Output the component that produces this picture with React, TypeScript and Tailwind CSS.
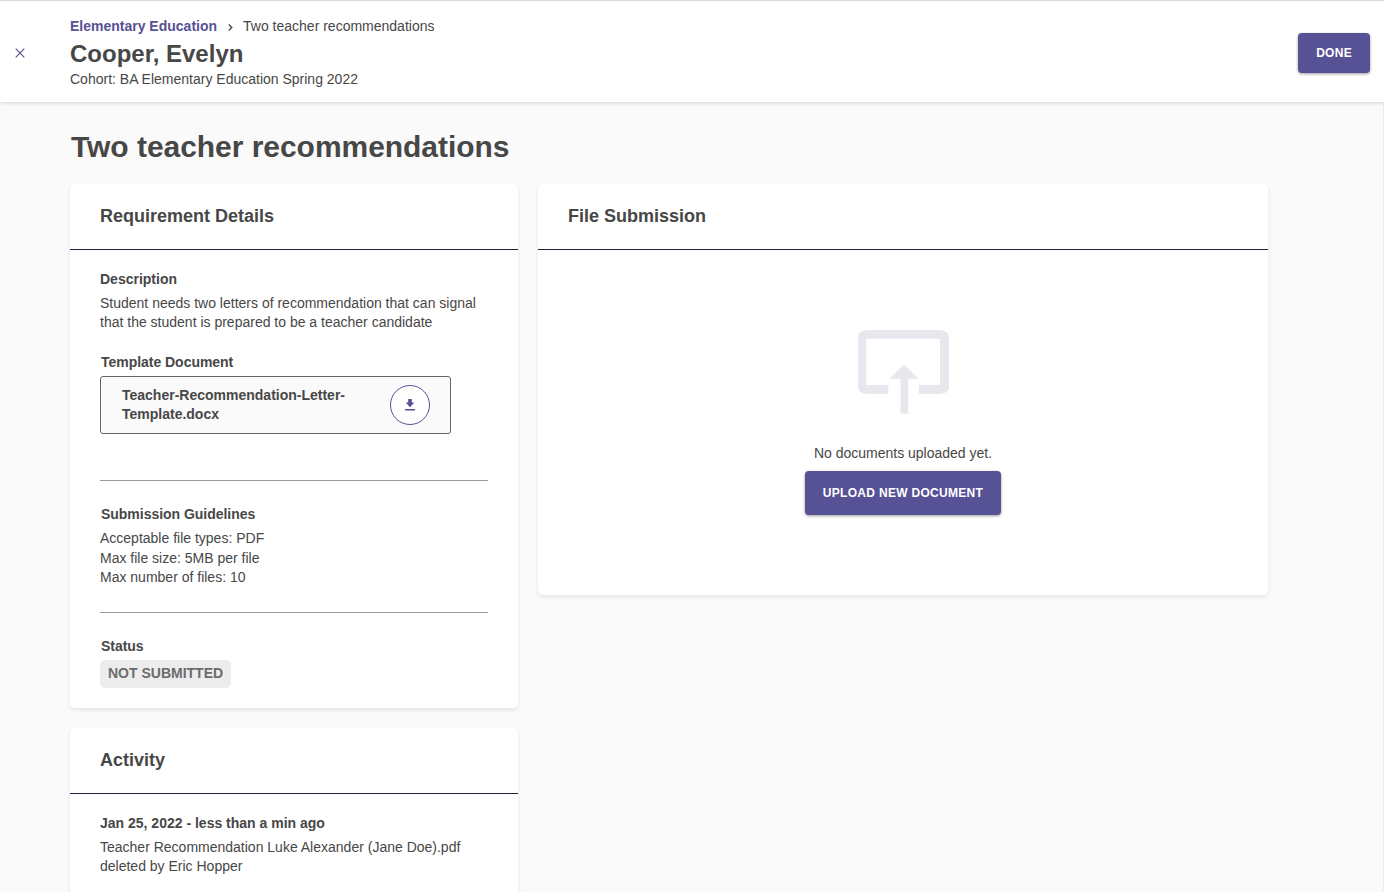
import type { ReactNode } from "react";

function Card({ title, className = "", children }: { title: string; className?: string; children: ReactNode }) {
  return (
    <section className={`rounded-[5px] bg-white shadow-[0_2px_4px_rgba(0,0,0,0.09)] ${className}`}>
      <h2 className="h-[66px] border-b border-[#2b1d45] px-[30px] pt-[19px] text-lg leading-[26px] font-bold">{title}</h2>
      {children}
    </section>
  );
}

function Label({ children }: { children: ReactNode }) {
  return <h3 className="pl-px leading-5 font-bold tracking-[-0.03px]">{children}</h3>;
}

// Outlined screen with an arrow coming in from below
function UploadIcon() {
  return (
    <svg width="91" height="84" viewBox="0 0 91 84" fill="#e9e7ed" aria-hidden="true">
      <path d="M9 0H82Q91 1 91 7V57Q91 63 82 64H61V55H82V8.700H8.300V55H30.300V64H9Q0 63 0 57V7Q0 1 9 0Z" />
      <path d="M46 34.500L60.500 48.700H50.200V83.700H42.500V48.700H31.500Z" />
    </svg>
  );
}

export default function App() {
  return (
    <div className="flex h-screen flex-col overflow-hidden bg-[#fafafa] font-['Liberation_Sans',Arial,sans-serif] text-sm leading-[19.5px] text-[#474747]">
      <header className="z-10 flex h-[102px] shrink-0 border-t border-[#dadada] bg-white shadow-[0_1px_4px_rgba(0,0,0,0.16)]">
        <button aria-label="Close" className="flex w-[70px] items-start pt-[47px] pl-[15px]">
          <svg width="10" height="10" viewBox="0 0 10 10" stroke="#575195" strokeWidth="1.2" fill="none">
            <path d="M0.700 0.700L9.300 9.300M9.300 0.700L0.700 9.300" />
          </svg>
        </button>
        <div className="pt-[15px]">
          <nav className="flex items-center leading-5">
            <a href="#" className="font-bold text-[#575195]">Elementary Education</a>
            <svg className="mt-0.5 mr-2.5 ml-[11px]" width="5" height="7" viewBox="0 0 5 7" stroke="#474747" strokeWidth="1.300" fill="none">
              <path d="M0.800 0.500L3.800 3.500L0.800 6.500" />
            </svg>
            <span>Two teacher recommendations</span>
          </nav>
          <h1 className="mt-[3px] text-2xl leading-[30px] font-bold">Cooper, Evelyn</h1>
          <p className="leading-5">Cohort: BA Elementary Education Spring 2022</p>
        </div>
        <button className="mt-8 mr-3.5 ml-auto h-10 rounded bg-[#575195] px-[18px] text-xs font-bold tracking-[0.3px] text-white shadow-[0_1px_3px_rgba(0,0,0,0.4)]">
          DONE
        </button>
      </header>

      <main className="min-h-0 flex-1 border-r border-[#eeeeee] pl-[70px]">
        <h1 className="pt-[25px] pl-px text-[30px] leading-10 font-bold tracking-[-0.04px]">Two teacher recommendations</h1>

        <div className="mt-[17px] flex items-start gap-5">
          <div className="w-[448px] space-y-5">
            <Card title="Requirement Details" className="h-[524px]">
              <div className="px-[30px] pt-[19px]">
                <h3 className="leading-5 font-bold">Description</h3>
                <p className="mt-[5px] leading-[19px]">
                  Student needs two letters of recommendation that can signal that the student is prepared to be a teacher candidate
                </p>

                <div className="mt-5">
                  <Label>Template Document</Label>
                </div>
                <div className="mt-1 flex h-[58px] w-[351px] items-center justify-between rounded-[3px] border border-[#666666] bg-[#fafafa] pr-5 pl-[21px]">
                  <span className="w-[230px] font-bold">Teacher-Recommendation-Letter-Template.docx</span>
                  <button aria-label="Download" className="flex size-10 items-center justify-center rounded-full border border-[#575195] bg-white">
                    <svg width="10" height="12" viewBox="0 0 10 12" fill="#575195">
                      <path d="M3.200 0H6.800V3.600H9.300L5 8.200L0.700 3.600H3.200ZM0 10H10V11.500H0Z" />
                    </svg>
                  </button>
                </div>

                <div className="mt-[46px] border-t border-[#999999] pt-[23px]">
                  <Label>Submission Guidelines</Label>
                  <ul className="mt-[5px]">
                    <li>Acceptable file types: PDF</li>
                    <li>Max file size: 5MB per file</li>
                    <li>Max number of files: 10</li>
                  </ul>
                </div>

                <div className="mt-6 border-t border-[#999999] pt-[23px]">
                  <Label>Status</Label>
                  <span className="mt-1 inline-block h-7 rounded-[5px] bg-[#ececec] px-2 leading-[27px] font-bold text-[#6b6b6b]">NOT SUBMITTED</span>
                </div>
              </div>
            </Card>

            <Card title="Activity" className="h-[300px]">
              <div className="px-[30px] pt-[19px]">
                <h3 className="leading-5 font-bold">Jan 25, 2022 - less than a min ago</h3>
                <p className="mt-[5px] leading-[19px]">Teacher Recommendation Luke Alexander (Jane Doe).pdf deleted by Eric Hopper</p>
              </div>
            </Card>
          </div>

          <Card title="File Submission" className="h-[411px] w-[730px]">
            <div className="flex flex-col items-center pt-20">
              <UploadIcon />
              <p className="mt-[29px] leading-5">No documents uploaded yet.</p>
              <button className="mt-2 h-11 rounded bg-[#575195] px-[18px] text-xs font-bold tracking-[0.3px] text-white shadow-[0_1px_3px_rgba(0,0,0,0.4)]">
                UPLOAD NEW DOCUMENT
              </button>
            </div>
          </Card>
        </div>
      </main>
    </div>
  );
}
